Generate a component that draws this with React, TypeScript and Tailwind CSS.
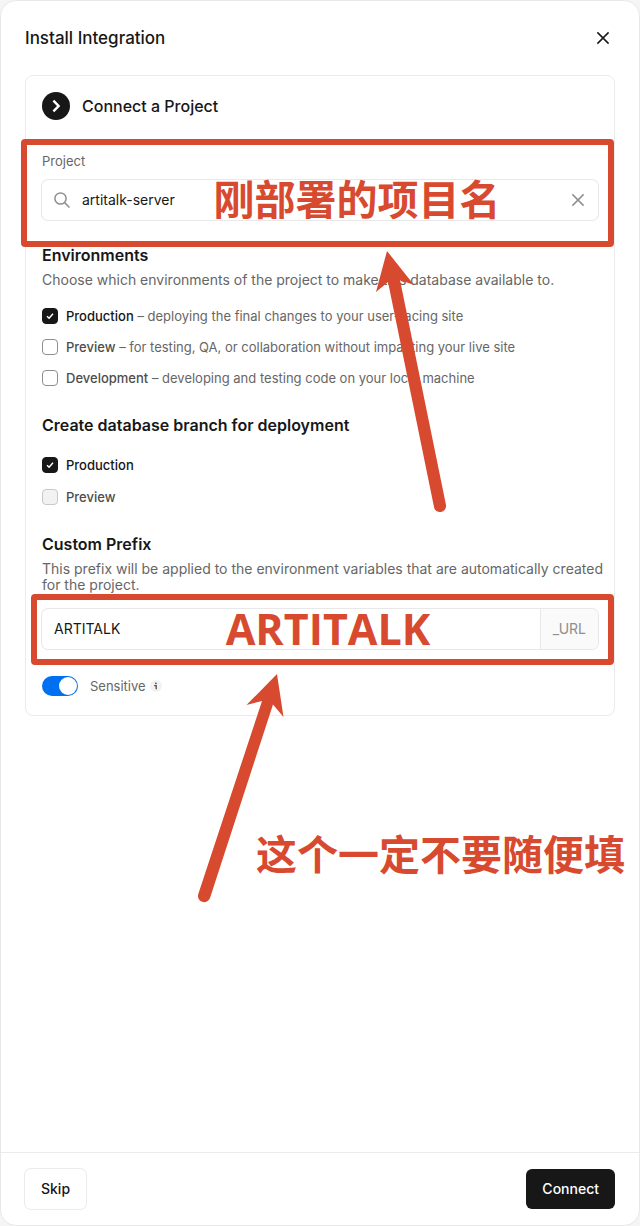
import React, { useState } from 'react';

interface CheckRowProps {
    id: string;
    label: string;
    description?: string;
    checked: boolean;
    disabled?: boolean;
    onChange?: (checked: boolean) => void;
}

const CheckRow: React.FC<CheckRowProps> = ({ id, label, description, checked, disabled, onChange }) => (
    <div className="flex items-center gap-2">
        <span className="grid size-4 shrink-0">
            <input
                id={id}
                type="checkbox"
                checked={checked}
                disabled={disabled}
                onChange={e => onChange?.(e.target.checked)}
                className="col-start-1 row-start-1 size-4 appearance-none rounded border border-[#8f8f8f] bg-white checked:border-[#171717] checked:bg-[#171717] disabled:border-[#c9c9c9] disabled:bg-[#f2f2f2]"
            />
            {checked && (
                <svg viewBox="0 0 16 16" className="pointer-events-none col-start-1 row-start-1 size-4" fill="none" stroke="white" strokeWidth="1.5">
                    <path d="M5 8.2 7.1 10.2 11 5.8" />
                </svg>
            )}
        </span>
        <label htmlFor={id} className="text-[13px] leading-4 text-[#666]">
            <span className={checked ? 'font-medium text-[#171717]' : 'font-medium text-[#4d4d4d]'}>{label}</span>
            {description && <> – {description}</>}
        </label>
    </div>
);

const CloseIcon = () => (
    <svg viewBox="0 0 16 16" className="size-4" fill="none" stroke="currentColor" strokeWidth="1.5">
        <path d="M2.4 2.4 13.6 13.6M13.6 2.4 2.4 13.6" />
    </svg>
);

const App: React.FC = () => {
    const [project, setProject] = useState('artitalk-server');
    const [prefix, setPrefix] = useState('ARTITALK');
    const [sensitive, setSensitive] = useState(true);
    const [envs, setEnvs] = useState({ production: true, preview: false, development: false });
    const [branchProduction, setBranchProduction] = useState(true);

    return (
        <div className="min-h-screen bg-[#f5f5f5] font-['Inter','Noto_Sans_CJK_SC',sans-serif] text-[#171717]">
            <div className="flex min-h-screen flex-col overflow-hidden rounded-2xl border border-[#e8e8e8] bg-white">
                <header className="flex h-[74px] items-center justify-between px-6">
                    <h1 className="text-[17px] leading-6 font-medium">Install Integration</h1>
                    <button type="button" aria-label="Close" className="grid size-6 place-items-center">
                        <CloseIcon />
                    </button>
                </header>

                <main className="flex-1 px-6 pb-6">
                    <section className="relative rounded-lg border border-[#ebebeb] px-4 pt-4 pb-[19px]">
                        <div className="flex items-center gap-3">
                            <span className="grid size-7 place-items-center rounded-full bg-[#171717] text-white">
                                <svg viewBox="0 0 16 16" className="size-4" fill="none" stroke="currentColor" strokeWidth="2.4">
                                    <path d="M5.4 2.6 10.6 8l-5.2 5.4" />
                                </svg>
                            </span>
                            <h2 className="text-base leading-6 font-medium">Connect a Project</h2>
                        </div>

                        {/* Project */}
                        <div className="relative mt-8">
                            <label htmlFor="project" className="block text-[13px] leading-[18px] text-[#666]">Project</label>
                            <div className="mt-2.5 flex h-10 items-center rounded-md px-3 ring-1 ring-[#e8e8e8]">
                                <svg viewBox="0 0 16 16" className="size-4 shrink-0 text-[#8f8f8f]" fill="none" stroke="currentColor" strokeWidth="1.5">
                                    <circle cx="6.5" cy="6.5" r="5.6" />
                                    <path d="m10.6 10.6 4.9 4.9" />
                                </svg>
                                <input
                                    id="project"
                                    type="text"
                                    value={project}
                                    onChange={e => setProject(e.target.value)}
                                    className="min-w-0 flex-1 px-3 text-sm outline-none"
                                />
                                <button type="button" aria-label="Clear" onClick={() => setProject('')} className="text-[#8f8f8f]">
                                    <CloseIcon />
                                </button>
                            </div>
                            <div className="pointer-events-none absolute -top-[13px] -right-4 -bottom-[27px] -left-[21px] rounded border-6 border-[#d84a2f]" />
                            <p className="pointer-events-none absolute inset-x-0 bottom-0 pl-[74px] text-center text-[41px] leading-10 font-bold text-[#d84a2f]">
                                刚部署的项目名
                            </p>
                        </div>

                        {/* Environments */}
                        <h3 className="mt-6 text-base leading-[22px] font-semibold">Environments</h3>
                        <p className="mt-1.5 text-sm leading-4 text-[#666]">
                            Choose which environments of the project to make this database available to.
                        </p>
                        <div className="mt-5 flex flex-col gap-[15px]">
                            <CheckRow
                                id="env-production"
                                label="Production"
                                description="deploying the final changes to your user-facing site"
                                checked={envs.production}
                                onChange={v => setEnvs({ ...envs, production: v })}
                            />
                            <CheckRow
                                id="env-preview"
                                label="Preview"
                                description="for testing, QA, or collaboration without impacting your live site"
                                checked={envs.preview}
                                onChange={v => setEnvs({ ...envs, preview: v })}
                            />
                            <CheckRow
                                id="env-development"
                                label="Development"
                                description="developing and testing code on your local machine"
                                checked={envs.development}
                                onChange={v => setEnvs({ ...envs, development: v })}
                            />
                        </div>

                        <h3 className="mt-7 text-base leading-[22px] font-semibold">Create database branch for deployment</h3>
                        <div className="mt-[21px] flex flex-col gap-4">
                            <CheckRow id="branch-production" label="Production" checked={branchProduction} onChange={setBranchProduction} />
                            <CheckRow id="branch-preview" label="Preview" checked={false} disabled />
                        </div>

                        {/* Custom prefix */}
                        <h3 className="mt-7 text-base leading-[22px] font-semibold">Custom Prefix</h3>
                        <p id="prefix-hint" className="-mr-3 mt-1.5 text-sm leading-4 text-[#666]">
                            This prefix will be applied to the environment variables that are automatically created for the project.
                        </p>
                        <div className="relative mt-4">
                            <div className="flex h-10 overflow-hidden rounded-md text-sm ring-1 ring-[#e8e8e8]">
                                <input
                                    type="text"
                                    aria-label="Custom Prefix"
                                    aria-describedby="prefix-hint"
                                    value={prefix}
                                    onChange={e => setPrefix(e.target.value)}
                                    className="min-w-0 flex-1 px-3 outline-none"
                                />
                                <span className="flex items-center border-l border-[#e8e8e8] bg-[#fafafa] px-3 text-[#8f8f8f]">_URL</span>
                            </div>
                            <div className="pointer-events-none absolute -top-[15px] -right-4 -bottom-4 -left-[11px] rounded border-6 border-[#d84a2f]" />
                            <p className="pointer-events-none absolute inset-x-0 top-0 pl-4 text-center font-['Open_Sans',sans-serif] text-[43px] leading-10 font-bold text-[#d84a2f]">
                                ARTITALK
                            </p>
                        </div>

                        <div className="mt-[27px] flex items-center">
                            <label htmlFor="sensitive" className="order-2 pl-3 text-[13px] leading-5 text-[#666]">Sensitive</label>
                            <span className="order-1 grid">
                                <input
                                    id="sensitive"
                                    type="checkbox"
                                    role="switch"
                                    checked={sensitive}
                                    onChange={e => setSensitive(e.target.checked)}
                                    className="peer col-start-1 row-start-1 h-5 w-9 appearance-none rounded-full bg-[#c9c9c9] checked:bg-[#0070f3]"
                                />
                                <span className="pointer-events-none col-start-1 row-start-1 m-px size-[18px] rounded-full bg-white peer-checked:justify-self-end" />
                            </span>
                            <svg viewBox="0 0 12 12" className="order-3 ml-1 size-3">
                                <circle cx="6" cy="6" r="6" fill="#f2f2f2" />
                                <circle cx="5.9" cy="3.3" r="0.9" fill="#4d4d4d" />
                                <path d="M4.2 5.6h2v3.6" fill="none" stroke="#4d4d4d" strokeWidth="1.3" />
                            </svg>
                        </div>

                        {/* Callout arrows */}
                        <svg
                            viewBox="0 0 80 270"
                            className="pointer-events-none absolute top-[173px] left-[345px] h-[270px] w-20"
                            fill="#d84a2f"
                        >
                            <path d="M16 2 43 36 29 31 75 256A6 6 0 0 1 63 258L17 33 5 43Z" />
                        </svg>
                        <svg
                            viewBox="0 0 90 234"
                            className="pointer-events-none absolute top-[596px] left-[170px] h-[234px] w-[90px]"
                            fill="#d84a2f"
                        >
                            <path d="M81 2 87.5 45 77 32.5 14 226A6 6 0 0 1 2.3 222L66 29 50.5 33Z" />
                        </svg>
                    </section>

                    <p className="-mr-2.5 mt-[119px] text-right text-[41px] leading-10 font-bold whitespace-nowrap text-[#d84a2f]">
                        这个一定不要随便填
                    </p>
                </main>

                <footer className="flex items-center justify-between border-t border-[#ebebeb] px-6 py-4">
                    <button type="button" className="h-10 rounded-md bg-white px-4 text-sm font-medium ring-1 ring-[#ebebeb]">Skip</button>
                    <button type="button" className="h-10 rounded-md bg-[#171717] px-4 text-sm font-medium text-white">Connect</button>
                </footer>
            </div>
        </div>
    );
};

export default App;
